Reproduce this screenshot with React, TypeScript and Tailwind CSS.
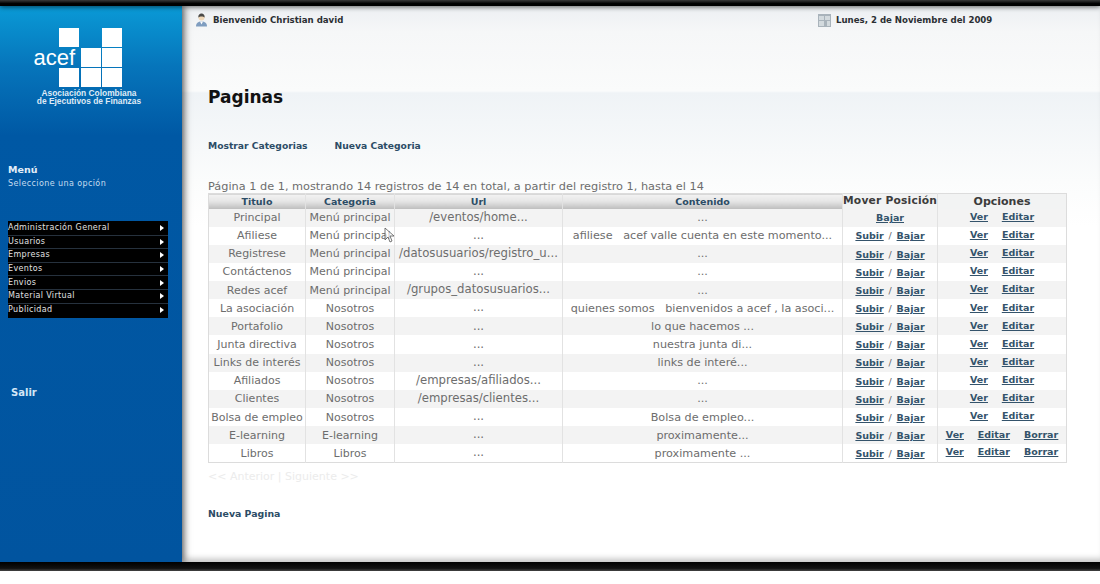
import React from 'react';

const menuItems = ['Administración General', 'Usuarios', 'Empresas', 'Eventos', 'Envios', 'Material Virtual', 'Publicidad'];

const rows = [
	['Principal', 'Menú principal', '/eventos/home...', '...'],
	['Afiliese', 'Menú principal', '...', 'afiliese   acef valle cuenta en este momento...'],
	['Registrese', 'Menú principal', '/datosusuarios/registro_u...', '...'],
	['Contáctenos', 'Menú principal', '...', '...'],
	['Redes acef', 'Menú principal', '/grupos_datosusuarios...', '...'],
	['La asociación', 'Nosotros', '...', 'quienes somos   bienvenidos a acef , la asoci...'],
	['Portafolio', 'Nosotros', '...', 'lo que hacemos ...'],
	['Junta directiva', 'Nosotros', '...', 'nuestra junta di...'],
	['Links de interés', 'Nosotros', '...', 'links de interé...'],
	['Afiliados', 'Nosotros', '/empresas/afiliados...', '...'],
	['Clientes', 'Nosotros', '/empresas/clientes...', '...'],
	['Bolsa de empleo', 'Nosotros', '...', 'Bolsa de empleo...'],
	['E-learning', 'E-learning', '...', 'proximamente...'],
	['Libros', 'Libros', '...', 'proximamente ...']
];

function Logo() {
	return (
		<div>
			<div className="ml-[59px] grid w-fit grid-cols-[repeat(3,20px)] grid-rows-[repeat(3,19px)] gap-x-[1.6px] gap-y-[1px]">
				<div className="bg-white" />
				<div />
				<div className="bg-white" />
				<div className="flex items-center justify-end pr-[4px]">
					<span className="text-[22px] leading-none text-white font-['Liberation_Sans',sans-serif]">acef</span>
				</div>
				<div className="bg-white" />
				<div className="bg-white" />
				<div className="bg-white" />
				<div className="bg-white" />
				<div className="bg-white" />
			</div>
			<div className="mt-[2px] pr-[4px] text-center text-[8.4px] leading-[8px] font-bold text-[#dfeaf6] font-['Liberation_Sans',sans-serif]">
				<div>Asociación Colombiana</div>
				<div>de Ejecutivos de Finanzas</div>
			</div>
		</div>
	);
}

function Sidebar() {
	return (
		<aside className="w-[182px] shrink-0 flex flex-col bg-[linear-gradient(180deg,#0a9ad6_0px,#0675bb_60px,#0058a4_130px,#01549f_100%)] shadow-[2px_0_7px_rgba(0,0,0,0.65)] z-10">
			<div className="pt-[22px]">
				<Logo />
			</div>
			<div className="mt-[59px] pl-[8px]">
				<div className="text-[9.5px] leading-[12px] font-bold text-[#e4eef8]">Menú</div>
				<div className="mt-[3px] text-[8px] leading-[10px] tracking-[0.4px] text-[#c6dcef]">Seleccione una opción</div>
			</div>
			<ul className="mt-[32px] ml-[8px] w-[160px] bg-black py-[1px]">
				{menuItems.map((item, i) => (
					<li key={item} className={`flex h-[13.6px] items-center justify-between pr-[4px] text-[8px] tracking-[0.35px] text-[#e2e2e2] ${i < menuItems.length - 1 ? 'border-b border-[#26313d]' : ''}`}>
						<span>{item}</span>
						<span className="h-0 w-0 border-y-[3px] border-l-[4px] border-y-transparent border-l-white" />
					</li>
				))}
			</ul>
			<div className="mt-[67px] pl-[11px] text-[10px] font-bold text-[#d4e6f6]">Salir</div>
		</aside>
	);
}

function UserIcon() {
	return (
		<svg width="13" height="14" viewBox="0 0 13 14">
			<path d="M1 13.5c0-3.5 2-5 5.5-5s5.500 1.500 5.500 5z" fill="#7f9dc0" />
			<path d="M5 8.500h3l-1.500 3z" fill="#fff" />
			<circle cx="6.500" cy="4.500" r="3" fill="#f0d8b8" />
			<path d="M3.400 4.500c-.3-3 1.600-4 3.100-4s3.400 1 3.100 4c-1-1.500-5.200-1.500-6.200 0z" fill="#4a4a48" />
		</svg>
	);
}

function CalendarIcon() {
	return (
		<svg width="13" height="13" viewBox="0 0 13 13">
			<rect width="13" height="13" fill="#a9b3bb" />
			<path d="M1 2h5v4H1zM7 2h5v4H7zM1 7h5v5H1zM9 7h3v5H9z" fill="#d3dade" />
		</svg>
	);
}

function Ops({ del }: { del?: boolean }) {
	return (
		<div className="flex justify-center gap-[14px] font-bold text-[#34536b] underline text-[9.5px]">
			<a>Ver</a>
			<a>Editar</a>
			{del && <a>Borrar</a>}
		</div>
	);
}

function PagesTable() {
	return (
		<table className="w-[858px] table-fixed border-collapse border border-[#dcdcdc] text-center text-[11px] text-[#6d6d6d]">
			<colgroup>
				<col className="w-[97px]" />
				<col className="w-[89px]" />
				<col className="w-[168px]" />
				<col className="w-[280px]" />
				<col className="w-[95px]" />
				<col className="w-[129px]" />
			</colgroup>
			<thead>
				<tr className="h-[15px] text-[9.5px] font-bold text-[#2c4c66]">
					{['Titulo', 'Categoria', 'Url', 'Contenido'].map((h) => (
						<th key={h} className="border-r border-[#e2e2e2] bg-[linear-gradient(180deg,#f3f3f3_0%,#e6e6e6_45%,#bcbcbc_100%)] p-0 leading-none">{h}</th>
					))}
					<th className="border-r border-[#e2e2e2] bg-[#f2f3f3] p-0 pt-[1px] text-[10.7px] leading-none tracking-[0.2px] text-[#3c3c3c] whitespace-nowrap">Mover Posición</th>
					<th className="bg-[#f2f3f3] p-0 text-[11px] leading-none text-[#3c3c3c]">Opciones</th>
				</tr>
			</thead>
			<tbody>
				{rows.map((r, i) => (
					<tr key={r[0]} className={`h-[18.15px] ${i % 2 === 0 ? 'bg-[#f3f3f3]' : 'bg-white'}`}>
						<td className="overflow-hidden whitespace-pre border-r border-[#e2e2e2] p-0 leading-none">{r[0]}</td>
						<td className="overflow-hidden whitespace-pre border-r border-[#e2e2e2] p-0 leading-none">{r[1]}</td>
						<td className="overflow-hidden whitespace-pre border-r border-[#e2e2e2] p-0 text-[11.7px] leading-none">{r[2]}</td>
						<td className="overflow-hidden whitespace-pre border-r border-[#e2e2e2] p-0 text-[11.2px] leading-none">{r[3]}</td>
						<td className="border-r border-[#e2e2e2] p-0 pt-[1px] text-[9.5px] font-bold text-[#34536b] leading-none">
							{i === 0 ? (
								<a className="underline">Bajar</a>
							) : (
								<>
									<a className="underline">Subir</a> <span className="mx-[1.5px] font-normal text-[#666]">/</span> <a className="underline">Bajar</a>
								</>
							)}
						</td>
						<td className="p-0 pb-[2px] leading-none">
							<Ops del={i >= 12} />
						</td>
					</tr>
				))}
			</tbody>
		</table>
	);
}

export default function App() {
	return (
		<div className="relative flex h-[584px] w-[1100px] flex-col overflow-hidden bg-white font-['DejaVu_Sans',sans-serif]">
			<div className="h-[6px] shrink-0 bg-[linear-gradient(180deg,#3a3a3a_0%,#000_60%)] shadow-[0_1px_5px_rgba(0,0,0,0.6)] z-20" />
			<div className="flex h-[556px] shrink-0">
				<Sidebar />
				<main className="flex-1 bg-[linear-gradient(180deg,#eceff2_0px,#f6f7f8_26px,#fafbfb_85px,#eff3f6_87px,#fbfcfc_175px,#ffffff_220px)] pl-[26px] shadow-[inset_0_-7px_6px_-4px_rgba(0,0,0,0.25)]">
					<header className="flex h-[28px] items-center text-[8.6px] font-bold text-[#2b2f33]">
						<div className="ml-[-13px] flex w-[623px] items-center gap-[5px]">
							<UserIcon />
							<span>Bienvenido Christian david</span>
						</div>
						<div className="flex items-center gap-[5px]">
							<CalendarIcon />
							<span>Lunes, 2 de Noviembre del 2009</span>
						</div>
					</header>
					<h1 className="mt-[53px] text-[17px] font-bold leading-[20px] text-[#111]">Paginas</h1>
					<div className="mt-[33px] flex gap-[27px] text-[9.2px] font-bold leading-[12px] text-[#2c4c66]">
						<a>Mostrar Categorias</a>
						<a>Nueva Categoria</a>
					</div>
					<p className="mt-[29px] text-[11.3px] leading-[12px] text-[#6d6d6d]">Página 1 de 1, mostrando 14 registros de 14 en total, a partir del registro 1, hasta el 14</p>
					<PagesTable />
					<div className="mt-[7px] text-[11px] leading-[14px] text-[#ececec]">{'<< Anterior | Siguiente >>'}</div>
					<a className="mt-[24px] block text-[9.4px] font-bold leading-[12px] text-[#2c4c66]">Nueva Pagina</a>
				</main>
			</div>
			<div className="h-[9px] shrink-0 bg-[linear-gradient(180deg,#000_0%,#111_70%,#444_100%)] z-20" />
			<svg className="absolute left-[384px] top-[227px] z-30" width="11" height="16" viewBox="0 0 11 16">
				<path d="M1 1v12l3-3 2 5 2-1-2-5h4z" fill="#fff" fillOpacity="0.6" stroke="#555" strokeWidth="0.8" />
			</svg>
		</div>
	);
}
